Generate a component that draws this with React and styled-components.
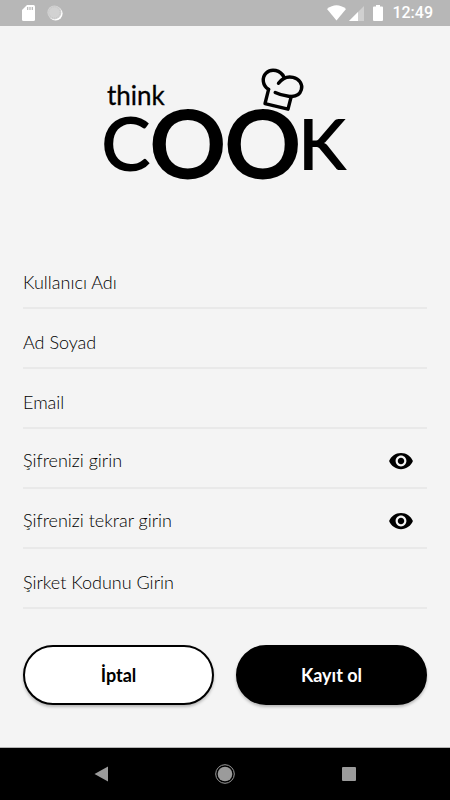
import { useState } from 'react';
import styled, { createGlobalStyle, css } from 'styled-components';
import { MdVisibility } from 'react-icons/md';

const GlobalStyle = createGlobalStyle`
  * {
    box-sizing: border-box;
  }

  body {
    margin: 0;
    background: #f4f4f4;
    color: #000;
    font-family: Lato, 'Open Sans', sans-serif;
  }
`;

const Screen = styled.div`
  display: flex;
  flex-direction: column;
  min-height: 100vh;
`;

const StatusBar = styled.header`
  display: flex;
  align-items: center;
  justify-content: space-between;
  height: 26px;
  padding: 0 17px 0 22px;
  background: #b7b7b7;
`;

const StatusGroup = styled.div`
  display: flex;
  align-items: center;
  gap: ${({ $gap }) => $gap}px;

  svg {
    display: block;
  }
`;

const Clock = styled.time`
  font-family: Roboto, sans-serif;
  font-size: 16px;
  font-weight: 500;
  line-height: 28px;
  color: #fff;
`;

const Main = styled.main`
  flex: 1;
  padding: 40px 23px;
`;

const Logo = styled.svg`
  display: block;
  width: 250px;
  height: 120px;
  margin: 0 auto;
  overflow: visible;
`;

const Form = styled.form`
  margin-top: 63px;
`;

const Field = styled.div`
  display: flex;
  align-items: center;
  height: 60px;
  padding-top: ${({ $raised }) => ($raised ? 4 : 8)}px;
  border-bottom: 2px solid #e9e9e9;
`;

const Input = styled.input`
  flex: 1;
  min-width: 0;
  height: 40px;
  padding: 0;
  border: none;
  outline: none;
  background: transparent;
  color: #000;
  font-family: inherit;
  font-size: 18px;
  font-weight: 300;

  &::placeholder {
    color: #000;
    opacity: 1;
  }
`;

const EyeButton = styled.button`
  display: flex;
  padding: 2px 0 0;
  margin-right: 13px;
  border: none;
  background: none;
  color: #000;
  cursor: pointer;
`;

const Actions = styled.div`
  display: grid;
  grid-template-columns: 1fr 1fr;
  gap: 22px;
  margin-top: 36px;
`;

const Button = styled.button`
  height: 60px;
  border: 2px solid #000;
  border-radius: 30px;
  background: #fff;
  color: #000;
  font-family: inherit;
  font-size: 18px;
  font-weight: 700;
  box-shadow: 0 2px 3px rgba(0, 0, 0, 0.25);
  cursor: pointer;

  ${({ $primary }) =>
    $primary &&
    css`
      background: #000;
      color: #fff;
    `}
`;

const NavBar = styled.nav`
  display: grid;
  grid-template-columns: repeat(3, 124px);
  justify-content: center;
  height: 53px;
  border-top: 1px solid #b4b4b4;
  background: #000;
`;

const NavButton = styled.button`
  display: flex;
  align-items: center;
  justify-content: center;
  padding: 0;
  border: none;
  background: none;
  color: #9b9b9b;
  cursor: pointer;
`;

const fields = [
  { name: 'username', label: 'Kullanıcı Adı' },
  { name: 'fullName', label: 'Ad Soyad' },
  { name: 'email', label: 'Email', type: 'email' },
  { name: 'password', label: 'Şifrenizi girin', type: 'password' },
  { name: 'passwordRepeat', label: 'Şifrenizi tekrar girin', type: 'password' },
  { name: 'companyCode', label: 'Şirket Kodunu Girin' },
];

const FormField = ({ name, label, type = 'text' }) => {
  const [visible, setVisible] = useState(false);
  const isPassword = type === 'password';

  return (
    <Field $raised={isPassword}>
      <Input
        name={name}
        type={isPassword && visible ? 'text' : type}
        placeholder={label}
        aria-label={label}
      />
      {isPassword && (
        <EyeButton
          type="button"
          aria-label="Şifreyi göster"
          onClick={() => setVisible(!visible)}
        >
          <MdVisibility size={26} />
        </EyeButton>
      )}
    </Field>
  );
};

const ThinkCookLogo = () => (
  <Logo viewBox="100 66 250 120" role="img" aria-label="think cook">
    <text x="107" y="105" fontSize="26" fontWeight="400" stroke="#000" strokeWidth="0.3">
      think
    </text>
    <text fontWeight="600">
      <tspan x="101" y="171" fontSize="75">C</tspan>
      <tspan x="149" y="179" fontSize="96" fontWeight="700">O</tspan>
      <tspan x="224" y="179" fontSize="96" fontWeight="700">O</tspan>
      <tspan x="298" y="170" fontSize="72">K</tspan>
    </text>
    <g
      fill="none"
      stroke="#000"
      strokeWidth="3.4"
      strokeLinecap="round"
      strokeLinejoin="round"
    >
      <path d="M268.6 89.4L265 103.6L288 109.2L291.2 96.6" />
      <path d="M268.6 89.4C262.5 85.5 261.5 77.5 266.2 73C271.5 68 280.5 70 284 77.2" />
      <path d="M278.5 83.3C282 78.6 287.5 76.2 293 77.4C299.5 78.8 303 84.5 301.3 89.8C299.6 95.3 294.5 97.1 288.5 96.2C283.5 95.7 279.5 94.8 275.2 92.6" />
    </g>
  </Logo>
);

const App = () => (
  <>
    <GlobalStyle />
    <Screen>
      <StatusBar>
        <StatusGroup $gap={12}>
          <svg width="13" height="16" viewBox="0 0 13 16">
            <path
              fill="#fff"
              d="M5 0H11.5Q13 0 13 1.5V14.5Q13 16 11.5 16H1.5Q0 16 0 14.5V5Z"
            />
            <path stroke="#b7b7b7" strokeWidth="1.2" d="M5.7 2V5M8 2V5M10.3 2V5" />
          </svg>
          <svg width="16" height="16" viewBox="0 0 16 16">
            <circle cx="8.6" cy="8.6" r="7" fill="#fff" />
            <circle cx="7.4" cy="7.4" r="7" fill="#d2d2d2" />
            <circle
              cx="7.4"
              cy="7.4"
              r="5.6"
              fill="none"
              stroke="#c4c4c4"
              strokeDasharray="1 1"
            />
          </svg>
        </StatusGroup>
        <StatusGroup $gap={9}>
          <StatusGroup $gap={3}>
            <svg width="19" height="16" viewBox="0 0 19 16">
              <path fill="#fff" d="M0 4Q9.5 -3.5 19 4L9.5 15.6Z" />
            </svg>
            <svg width="15" height="16" viewBox="0 0 15 16">
              <path fill="#d0d0d0" d="M15 1V16H0Z" />
              <path fill="#fff" d="M9 7V16H0Z" />
            </svg>
          </StatusGroup>
          <svg width="10" height="16" viewBox="0 0 10 16">
            <path
              fill="#fff"
              d="M3 0H7V1.6H9Q10 1.6 10 2.6V15Q10 16 9 16H1Q0 16 0 15V2.6Q0 1.6 1 1.6H3Z"
            />
          </svg>
          <Clock>12:49</Clock>
        </StatusGroup>
      </StatusBar>

      <Main>
        <ThinkCookLogo />
        <Form onSubmit={event => event.preventDefault()}>
          {fields.map(field => (
            <FormField key={field.name} {...field} />
          ))}
          <Actions>
            <Button type="button">İptal</Button>
            <Button type="submit" $primary>
              Kayıt ol
            </Button>
          </Actions>
        </Form>
      </Main>

      <NavBar>
        <NavButton type="button" aria-label="Geri">
          <svg width="14" height="16" viewBox="0 0 14 16">
            <path fill="currentColor" d="M14 0.5V15.5L0.5 8Z" />
          </svg>
        </NavButton>
        <NavButton type="button" aria-label="Ana ekran">
          <svg width="20" height="20" viewBox="0 0 20 20">
            <circle cx="10" cy="10" r="7.3" fill="currentColor" />
            <circle cx="10" cy="10" r="9.3" fill="none" stroke="currentColor" />
          </svg>
        </NavButton>
        <NavButton type="button" aria-label="Son uygulamalar">
          <svg width="14" height="14" viewBox="0 0 14 14">
            <rect width="14" height="14" rx="1" fill="currentColor" />
          </svg>
        </NavButton>
      </NavBar>
    </Screen>
  </>
);

export default App;
